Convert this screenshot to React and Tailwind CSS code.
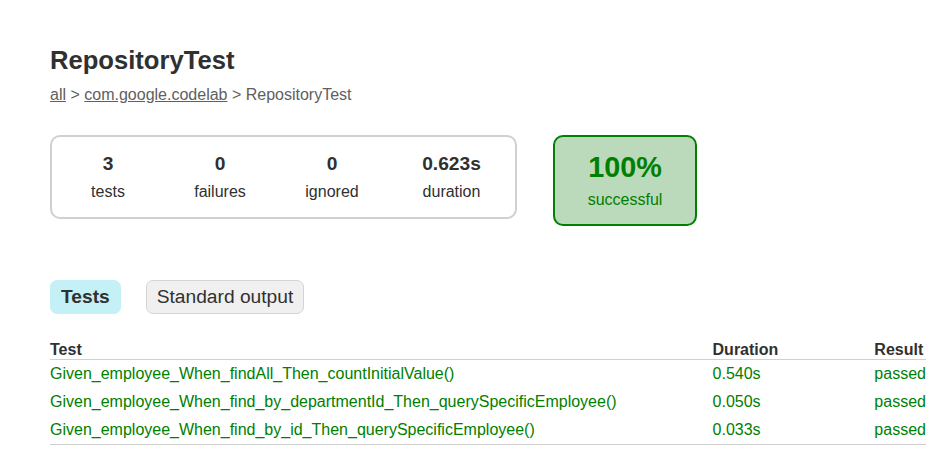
const stats = [
  { value: '3', label: 'tests', w: 'w-[110px]' },
  { value: '0', label: 'failures', w: 'w-[110px]' },
  { value: '0', label: 'ignored', w: 'w-[110px]' },
  { value: '0.623s', label: 'duration', w: 'w-[125px]' },
];

const tests = [
  { name: 'Given_employee_When_findAll_Then_countInitialValue()', duration: '0.540s' },
  { name: 'Given_employee_When_find_by_departmentId_Then_querySpecificEmployee()', duration: '0.050s' },
  { name: 'Given_employee_When_find_by_id_Then_querySpecificEmployee()', duration: '0.033s' },
];

const App = () => {
  return (
    <div className="min-h-screen bg-white font-['Liberation_Sans',Arial,sans-serif] text-[16px] text-[#303030] px-[50px] pt-[45px] overflow-hidden">
      {/* Title */}
      <h1 className="text-[25.6px] font-bold leading-[30px] whitespace-nowrap">RepositoryTest</h1>

      {/* Breadcrumbs */}
      <div className="mt-[11px] leading-[18px] text-[#606060] whitespace-nowrap">
        <a href="#" className="underline">all</a> &gt;{' '}
        <a href="#" className="underline">com.google.codelab</a> &gt; RepositoryTest
      </div>

      {/* Summary */}
      <div className="mt-[31px] flex items-start">
        <div className="flex border-2 border-[#d0d0d0] rounded-[10px]">
          {stats.map((s) => (
            <div key={s.label} className="p-px">
              <div className={`${s.w} py-[15px] text-center`}>
                <p className="text-[19.2px] font-bold leading-[22px] mb-[8px]">{s.value}</p>
                <p className="leading-[18px]">{s.label}</p>
              </div>
            </div>
          ))}
        </div>
        <div className="ml-[36px] w-[144px] border-2 border-[#008000] bg-[#bbd9bb] rounded-[10px] py-[15px] text-center text-[#008000]">
          <p className="text-[28.8px] font-bold leading-[31px] mb-[8px]">100%</p>
          <p className="leading-[18px]">successful</p>
        </div>
      </div>

      {/* Tabs */}
      <ul className="mt-[54px] flex">
        <li className="mr-[25px] px-[10px] py-[5px] rounded-[7px] border border-[#c5f0f5] bg-[#c5f0f5]">
          <a href="#" className="block text-[19.2px] font-bold leading-[22px]">Tests</a>
        </li>
        <li className="px-[10px] py-[5px] rounded-[7px] border border-[#d4d4d4] bg-[#f0f0f0]">
          <a href="#" className="block text-[19.2px] leading-[22px]">Standard output</a>
        </li>
      </ul>

      {/* Test table */}
      <table className="mt-[26px] border-collapse border-b border-[#d0d0d0] whitespace-nowrap">
        <thead>
          <tr>
            <th className="text-left font-bold leading-[19px] border-b border-[#d0d0d0]">Test</th>
            <th className="text-left font-bold leading-[19px] pl-[96px] border-b border-[#d0d0d0]">Duration</th>
            <th className="text-left font-bold leading-[19px] pl-[96px] border-b border-[#d0d0d0]">Result</th>
          </tr>
        </thead>
        <tbody className="text-[#008000]">
          {tests.map((t) => (
            <tr key={t.name}>
              <td className="py-[5px] leading-[18px]">{t.name}</td>
              <td className="py-[5px] pl-[96px] leading-[18px]">{t.duration}</td>
              <td className="py-[5px] pl-[96px] leading-[18px]">passed</td>
            </tr>
          ))}
        </tbody>
      </table>
    </div>
  );
};

export default App;
